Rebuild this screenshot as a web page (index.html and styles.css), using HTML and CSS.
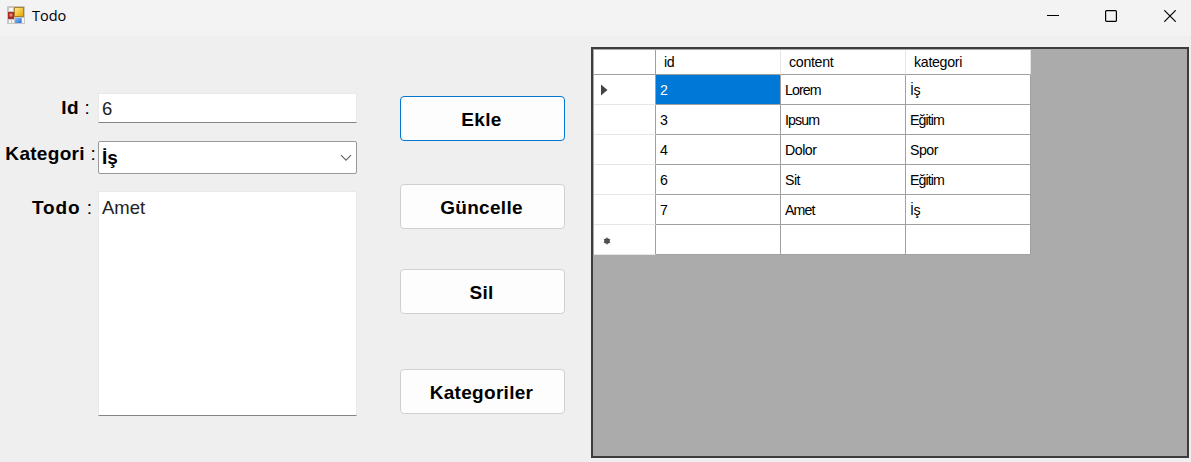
FILE: index.html
```html
<!DOCTYPE html>
<html lang="tr">
<head>
<meta charset="utf-8">
<title>Todo</title>
<link rel="stylesheet" href="styles.css">
</head>
<body>
<header class="titlebar">
  <svg class="app-icon" width="18" height="18" viewBox="0 0 18 18">
    <defs>
      <linearGradient id="gold" x2="1" y2="1"><stop stop-color="#ffe98a"/><stop offset="1" stop-color="#e9a800"/></linearGradient>
      <linearGradient id="blue" x2="1" y2="1"><stop stop-color="#8fc0ff"/><stop offset="1" stop-color="#2d6fd0"/></linearGradient>
    </defs>
    <rect width="18" height="18" rx="1" fill="#c6c6c6"/>
    <path d="M2 2h4v3H2zM2 14h2v3H2zM5 14h2v3H5zM15 12h2v5h-2z" fill="#f6f6f6"/>
    <rect x="1" y="6" width="6" height="7" fill="#a92b26"/>
    <rect x="2.500" y="7.500" width="3" height="3" fill="#e58176"/>
    <rect x="7" y="1" width="10" height="10" fill="#a9822b"/>
    <rect x="8" y="2" width="8" height="8" fill="url(#gold)"/>
    <rect x="8" y="12" width="6.500" height="5" fill="url(#blue)"/>
  </svg>
  <span class="title">Todo</span>
  <div class="window-controls">
    <svg class="minimize" width="12" height="12" viewBox="0 0 12 12"><path d="M0 5.500h12" stroke="#000"/></svg>
    <svg width="12" height="12" viewBox="0 0 12 12"><rect x=".6" y=".6" width="10.800" height="10.800" rx="1" fill="none" stroke="#000" stroke-width="1.200"/></svg>
    <svg width="12" height="12" viewBox="0 0 12 12"><path d="M.3.3l11.400 11.400M11.700.3L.3 11.700" stroke="#000" stroke-width="1.200"/></svg>
  </div>
</header>
<main class="content">
  <section class="form">
    <div class="label label-id">Id <span class="colon">:</span></div>
    <div class="field field-id">6</div>
    <div class="label label-category">Kategori <span class="colon">:</span></div>
    <div class="select"><span>İş</span>
      <svg width="12" height="8" viewBox="0 0 12 8"><path d="M1 1.200l5 5 5-5" fill="none" stroke="#666" stroke-width="1.200"/></svg>
    </div>
    <div class="label label-todo">Todo <span class="colon">:</span></div>
    <div class="field field-todo">Amet</div>
  </section>
  <section class="actions">
    <button class="button primary">Ekle</button>
    <button class="button update">Güncelle</button>
    <button class="button delete">Sil</button>
    <button class="button categories">Kategoriler</button>
  </section>
  <section class="datagrid">
    <div class="table">
      <div class="corner"></div><div class="head">id</div><div class="head">content</div><div class="head last">kategori</div>
      <div class="rowhead"><svg width="7" height="12" viewBox="0 0 7 12"><path d="M0 .5l6.500 5.500L0 11.500z" fill="#444"/></svg></div><div class="cell selected">2</div><div class="cell tight">Lorem</div><div class="cell">İş</div>
      <div class="rowhead"></div><div class="cell">3</div><div class="cell tight">Ipsum</div><div class="cell tight">Eğitim</div>
      <div class="rowhead"></div><div class="cell">4</div><div class="cell">Dolor</div><div class="cell">Spor</div>
      <div class="rowhead"></div><div class="cell">6</div><div class="cell">Sit</div><div class="cell tight">Eğitim</div>
      <div class="rowhead"></div><div class="cell">7</div><div class="cell tight">Amet</div><div class="cell">İş</div>
      <div class="rowhead new"><svg width="8" height="8" viewBox="0 0 8 8"><circle cx="4" cy="4" r="2.800" fill="#444"/><path d="M4 .5v7M.8 2.200l6.400 3.600M.8 5.800l6.400-3.600" stroke="#555"/></svg></div><div class="cell"></div><div class="cell"></div><div class="cell"></div>
    </div>
  </section>
</main>
</body>
</html>
```
FILE: styles.css
```css
* { box-sizing: border-box; }
body {
  margin: 0;
  width: 1191px;
  height: 462px;
  overflow: hidden;
  background: #efefef;
  color: #000;
  font-family: "Liberation Sans", Arial, sans-serif;
}
.titlebar {
  display: flex;
  align-items: center;
  height: 36px;
  padding: 0 15px 4px 7px;
  background: #f3f3f3;
}
.app-icon { margin-top: -2px; }
.title {
  margin-left: 7px;
  font: 14.5px/20px "Open Sans", sans-serif;
}
.window-controls {
  display: flex;
  gap: 47px;
  margin-left: auto;
}
.minimize { margin-right: -1px; }
.content {
  display: grid;
  grid-template-columns: 357px 208px 598px;
  height: 426px;
}
.form {
  display: grid;
  grid-template-columns: 98px 259px;
  grid-template-rows: 30px 33px 224px;
  row-gap: 18px;
  padding-top: 57px;
}
.label {
  font-size: 19px;
  font-weight: bold;
  line-height: 22px;
  letter-spacing: .3px;
  text-align: right;
  white-space: nowrap;
}
.colon { font-weight: normal; }
.label-id { padding: 4px 8px 0 0; }
.label-category { padding: 2px 2px 0 0; }
.label-todo {
  padding: 5px 5px 0 0;
  letter-spacing: .9px;
}
.field {
  border: 1px solid #e9e9e9;
  border-bottom: 1px solid #858585;
  background: #fff;
  color: #222;
  font-size: 18.5px;
  line-height: 22px;
  padding: 4px 3px 0;
}
.field-todo {
  margin-top: -1px;
  padding-top: 5px;
}
.select {
  display: flex;
  align-items: center;
  justify-content: space-between;
  border: 1px solid #999;
  border-radius: 2px;
  background: #fff;
  padding: 0 4px 0 3px;
  font-size: 19px;
  font-weight: bold;
}
.actions {
  display: flex;
  flex-direction: column;
  padding: 60px 0 0 43px;
}
.button {
  width: 165px;
  height: 45px;
  padding: 2px 2px 0 0;
  border: 1px solid #d0d0d0;
  border-radius: 4px;
  background: #fdfdfd;
  color: #000;
  font: bold 19px/22px "Liberation Sans", Arial, sans-serif;
  letter-spacing: .3px;
}
.primary { border-color: #0078d4; }
.update { margin-top: 43px; }
.delete { margin-top: 40px; }
.categories { margin-top: 55px; }
.datagrid {
  width: 598px;
  height: 411px;
  margin: 11px 0 0 26px;
  padding: 1px;
  border: 2px solid #3c3c3c;
  background: #ababab;
}
.table {
  display: grid;
  grid-template-columns: 62px repeat(3, 125px);
  grid-template-rows: 25px repeat(6, 30px);
  width: 437px;
  font-size: 14.2px;
}
.table > div {
  display: flex;
  align-items: center;
  background: #fff;
  border-right: 1px solid #a0a0a0;
  border-bottom: 1px solid #a0a0a0;
}
.table > .head {
  padding-left: 8px;
  border-right-color: #e5e5e5;
  letter-spacing: -.3px;
}
.table > .rowhead {
  padding-left: 7px;
  border-bottom-color: #e5e5e5;
}
.table > .new {
  padding: 3px 0 0 9px;
}
.table > .cell {
  padding-left: 4px;
  letter-spacing: -.5px;
}
.table > .tight { letter-spacing: -.9px; }
.table > .selected {
  background: #0078d7;
  color: #fff;
}
```
